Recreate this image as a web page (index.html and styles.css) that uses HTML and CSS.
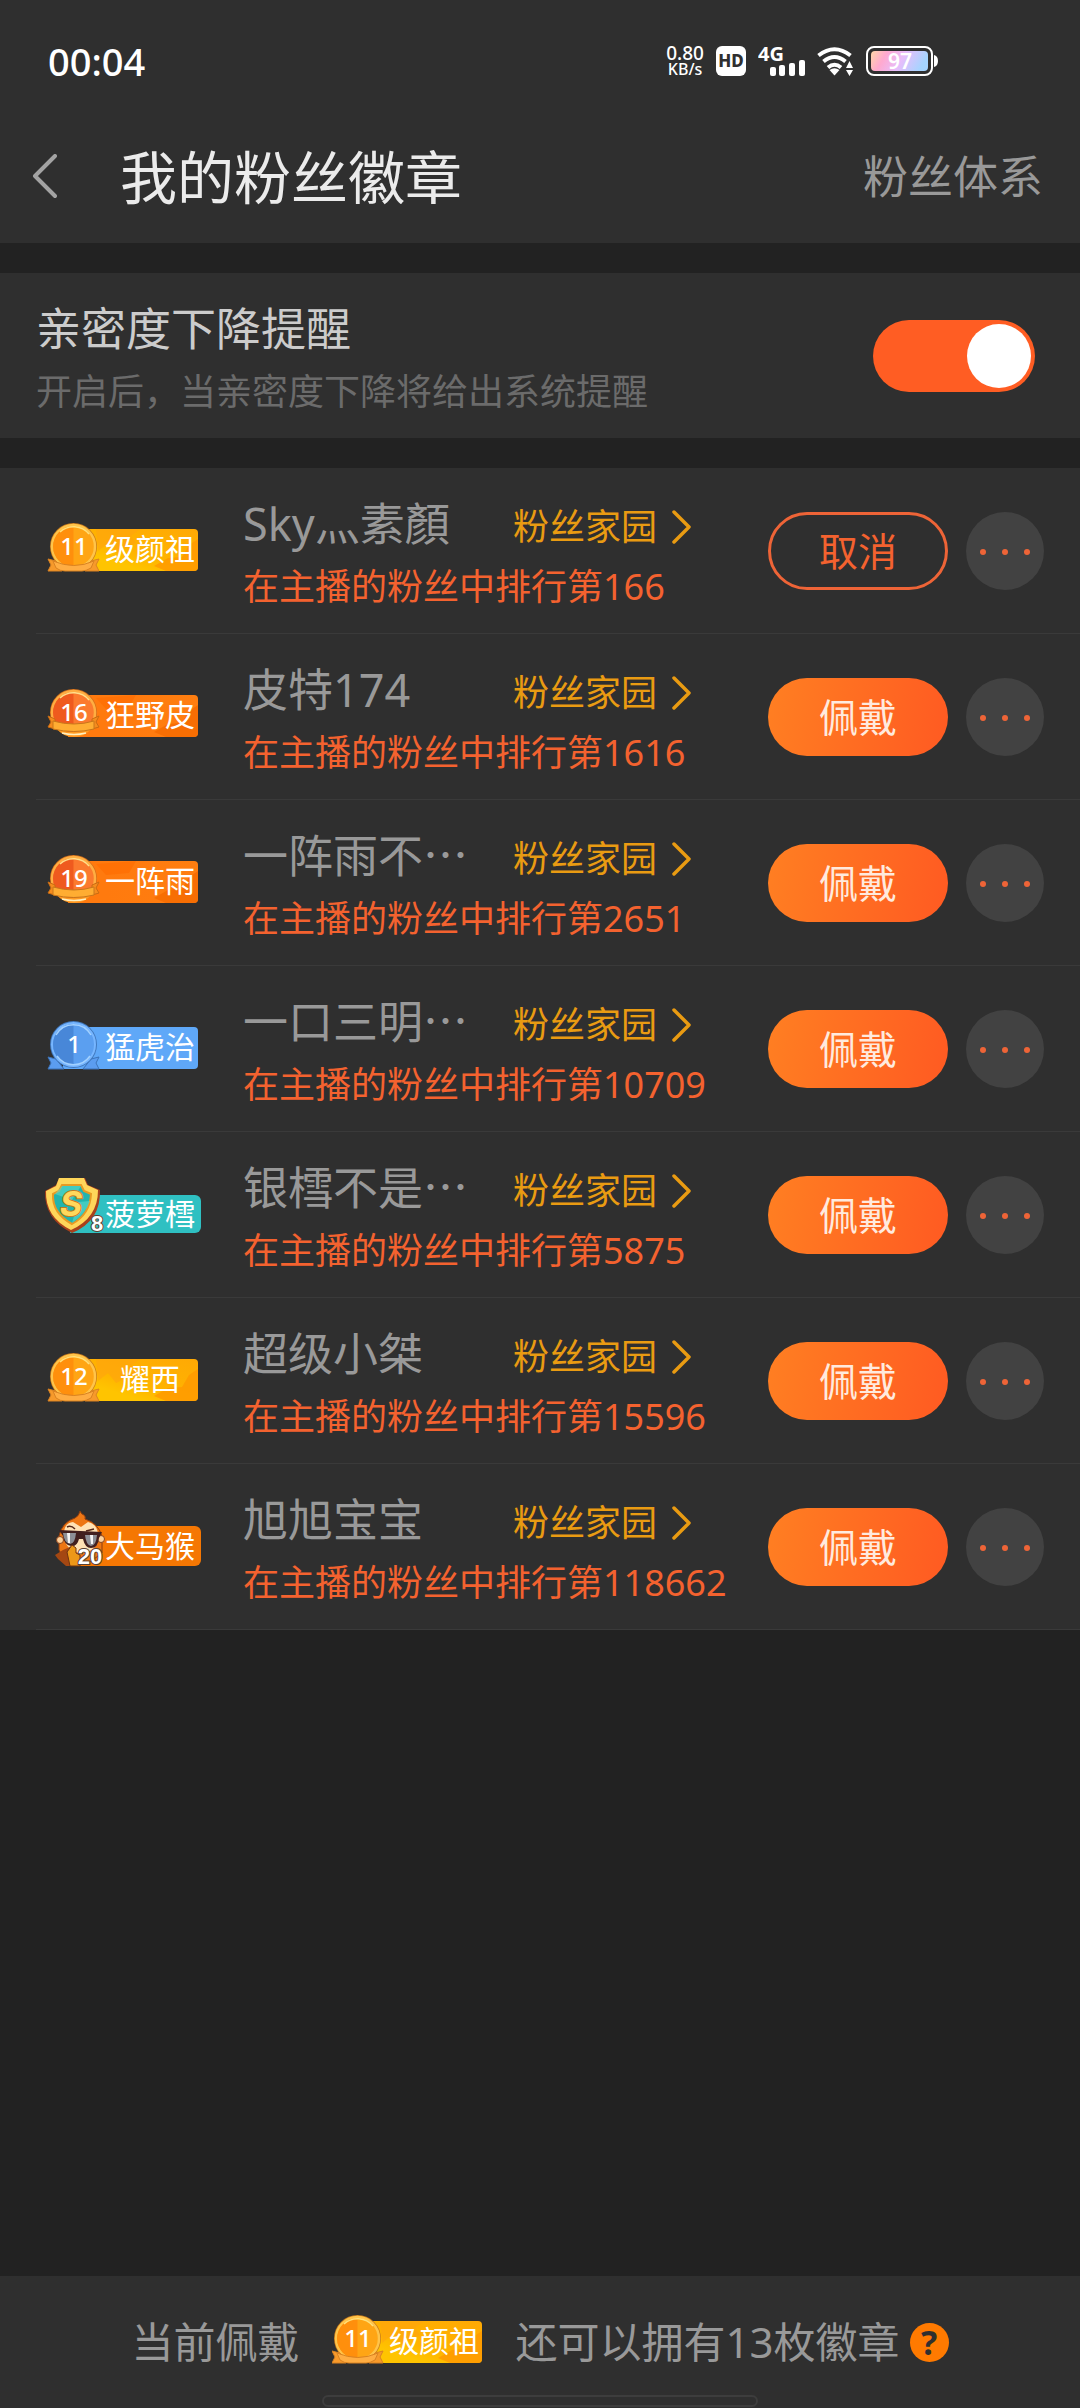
FILE: index.html
```html
<!DOCTYPE html>
<html lang="zh-CN">
<head>
<meta charset="utf-8">
<meta name="viewport" content="width=device-width, initial-scale=1">
<title>我的粉丝徽章</title>
<link rel="stylesheet" href="styles.css">
</head>
<body>
<svg class="sprite" aria-hidden="true">
  <defs>
    <linearGradient id="gold-bar" x1="0" y1="1" x2="1" y2="0"><stop offset="0.3" stop-color="#ffc400"/><stop offset="0.5" stop-color="#ffb300"/><stop offset="1" stop-color="#ffa904"/></linearGradient>
    <linearGradient id="orange-bar" x1="0" y1="0" x2="1" y2="0"><stop offset="0.3" stop-color="#ff7a0e"/><stop offset="1" stop-color="#ff7e10"/></linearGradient>
    <linearGradient id="battery" x1="0" y1="0" x2="1" y2="0.2"><stop offset="0" stop-color="#ffd7a8"/><stop offset="0.28" stop-color="#ffa9cf"/><stop offset="0.6" stop-color="#e7bdfb"/><stop offset="1" stop-color="#a6d4ff"/></linearGradient>
  </defs>
  <symbol id="gold" viewBox="44 45 160 76">
    <path d="M74 61H194a4 4 0 0 1 4 4V99a4 4 0 0 1-4 4H62z" fill="url(#gold-bar)"/>
    <path d="M96 61h44l-9 7 5 7-20 10-8-10-10 8z" fill="#ffa40f" opacity=".6"/>
    <path d="M154 98l14-8 14-1 7-12 9-6V99a4 4 0 0 1-4 4h-28z" fill="#ff9800" opacity=".8"/>
    <circle cx="73.500" cy="78.500" r="23.500" fill="#c97b1c"/>
    <circle cx="73.500" cy="78.500" r="21.500" fill="#ffa514" stroke="#ffc44a" stroke-width="2.500"/>
    <path d="M73.500 58a20 20 0 0 0 0 41z" fill="#ff8f0c"/>
    <path d="M60 64a20 20 0 0 1 29 2" fill="none" stroke="#ffe07a" stroke-width="1.500"/>
    <path d="M48 91l8 2 6 10H48l3-6zM99 91l-8 2-6 10h14l-3-6z" fill="#f79a2b" stroke="#d98222" stroke-width="1"/>
    <path d="M53 93q21 9 41 0l-3 7q-5 3-9 3H65q-5 0-9-3z" fill="#ffad42" stroke="#d98222" stroke-width="1"/>
  </symbol>
  <symbol id="orange" viewBox="44 45 160 76">
    <path d="M74 61H194a4 4 0 0 1 4 4V99a4 4 0 0 1-4 4H68z" fill="url(#orange-bar)"/>
    <path d="M96 64l40-3-7 12-23 2z" fill="#ff6a00" opacity=".6"/>
    <path d="M154 98l14-8 14-1 7-12 9-6V99a4 4 0 0 1-4 4h-28z" fill="#f56a00" opacity=".8"/>
    <circle cx="73.500" cy="78.500" r="23.500" fill="#d4701c"/>
    <circle cx="73.500" cy="78.500" r="21.500" fill="#fb7a2e" stroke="#ffae42" stroke-width="2.500"/>
    <path d="M73.500 58a20 20 0 0 0 0 41z" fill="#ef5a1e"/>
    <path d="M60 64a20 20 0 0 1 29 2" fill="none" stroke="#ffdf8a" stroke-width="1.500"/>
    <path d="M56 94q17 8 36 0-7 9-18 9t-18-9z" fill="#ff9a22"/>
    <path d="M62 99q12 3 24 0" fill="none" stroke="#fff0c0" stroke-width="1.500"/>
    <path d="M48 82l7 3v10l-7-2 3-5zM99 82l-7 3v10l7-2-3-5z" fill="#f58c1e" stroke="#c96b12" stroke-width="1"/>
    <path d="M53 87q21 6 41 0v8q-20 5-41 0z" fill="#ffad32" stroke="#c9761a" stroke-width="1"/>
  </symbol>
  <symbol id="blue" viewBox="44 45 160 76">
    <path d="M74 61H194a4 4 0 0 1 4 4V99a4 4 0 0 1-4 4H62z" fill="#5fa8f8"/>
    <path d="M48 91l8 2 8 10H48l3-6zM99 91l-8 2-8 10h16l-3-6z" fill="#5b9df0" stroke="#3c73b8" stroke-width="1"/>
    <circle cx="73.500" cy="78.500" r="23.500" fill="#4179be"/>
    <circle cx="73.500" cy="78.500" r="21.500" fill="#5b9ff0" stroke="#77b6ff" stroke-width="2"/>
    <path d="M73.500 58a20 20 0 0 0 0 41z" fill="#4887d8"/>
    <path d="M56 69a20 20 0 0 1 35 0M57 90a20 20 0 0 0 33 0" fill="none" stroke="#a2d1ff" stroke-width="1.500"/>
  </symbol>
  <symbol id="shield" viewBox="44 45 160 76">
    <path d="M74 63H195a6 6 0 0 1 6 6V95a6 6 0 0 1-6 6H70z" fill="#2fc0c2"/>
    <path d="M59 46H85l3 7 12 5q1 31-28 43-28-14-27-42l11-6z" fill="#a8401c"/>
    <path d="M59 46H84l3 7 11 5q0 28-27 40-26-13-25-39l10-5z" fill="#ffd65a"/>
    <path d="M62 53H81l3 6 7 3q-1 20-19 30-20-11-19-30l6-3z" fill="#22b4ae" stroke="#e79a24" stroke-width="2"/>
    <path d="M62 54H81l-9 14-17-6zM72 91q14-10 18-22l-12 1z" fill="#5adbcb" opacity=".6"/>
  </symbol>
  <symbol id="monkey" viewBox="44 45 160 76">
    <path d="M90 62H195a6 6 0 0 1 6 6V96a6 6 0 0 1-6 6H66z" fill="#f57703"/>
    <path d="M75 54q4-2 5-7 1 3 4 4 2 2 1 4 13 4 17 17v17l-12 9H66l-7-12V72q3-14 16-18z" fill="#ed7614" stroke="#8a3c10" stroke-width="1"/>
    <circle cx="60" cy="76" r="3.500" fill="#ffd29c" stroke="#8b421a"/>
    <circle cx="101" cy="75" r="3.500" fill="#ffd29c" stroke="#8b421a"/>
    <path d="M64 70q0-11 9-12l8 5 7-5q9 2 10 12 1 18-17 19-16-1-17-19z" fill="#ffe2b5"/>
    <path d="M67 63q4-2 8 2M86 67l8-2" fill="none" stroke="#542619" stroke-width="1.500"/>
    <path d="M59 66l43 2-3 6q-1 10-8 10-6 0-8-9h-4q-2 8-8 7-7-1-8-10z" fill="#42201f"/>
    <path d="M63 69h13q-1 11-6 11-6-1-7-11zM85 71h12q-1 11-6 11-5-1-6-11z" fill="#8d8f96"/>
    <path d="M67 69h3v10h-2zM90 71h3v9h-2z" fill="#f5f5f5"/>
    <path d="M55 91l8-5 9-4 2 5-5 4 6 1 1 10H66l-8-7z" fill="#a44712"/>
    <path d="M67 88l5-7 4 3v5l4 2v11H70z" fill="#ed9818" stroke="#70330f"/>
  </symbol>
  <symbol id="chevron" viewBox="0 0 20 34"><path d="M2 2l15 15L2 32" fill="none" stroke="currentColor" stroke-width="3.500" stroke-linecap="round" stroke-linejoin="round"/></symbol>
  <symbol id="dots" viewBox="0 0 50 8"><circle cx="3" cy="5" r="3"/><circle cx="25" cy="5" r="3"/><circle cx="47" cy="5" r="3"/></symbol>
</svg>

<div class="page">
  <header class="top">
    <div class="status">
      <span class="clock">00:04</span>
      <div class="status-icons">
        <span class="speed"><span>0.80</span><span class="unit">KB/s</span></span>
        <span class="hd">HD</span>
        <svg width="47" height="30" viewBox="0 0 47 30" fill="#fff"><text class="network" x="0" y="15">4G</text><rect x="12" y="21" width="6" height="9" rx="2"/><rect x="21" y="19" width="6" height="11" rx="2"/><rect x="31" y="17" width="6" height="13" rx="2"/><rect x="41" y="14" width="6" height="16" rx="2"/></svg>
        <svg width="37" height="30" viewBox="0 0 37 30"><g fill="none" stroke="#fff" stroke-width="4"><path d="M1.500 9.500q16-12.500 32 0"/><path d="M6.500 15.500q11-9 22 0"/><path d="M11 21.500q6.500-5.500 13 0"/></g><path d="M12.500 24q5-3.500 10 0l-5 5.500z" fill="#fff"/><path d="M29 22l3.500-7 3.500 7zM29 24l3.500 6 3.500-6z" fill="#fff"/></svg>
        <svg width="72" height="30" viewBox="0 0 72 30"><rect x="1" y="1" width="65" height="28" rx="7" fill="none" stroke="#fff" stroke-width="2"/><rect x="5" y="5" width="57" height="20" rx="4" fill="url(#battery)"/><path d="M68 9q4 1 4 6t-4 6z" fill="#fff"/><text class="charge" x="34" y="23">97</text></svg>
      </div>
    </div>
    <nav class="appbar">
      <button class="back" type="button" aria-label="返回"><svg width="26" height="46" viewBox="0 0 26 46"><path d="M23 2L3 22l20 20" fill="none" stroke="#a3a3a3" stroke-width="4" stroke-linecap="round" stroke-linejoin="round"/></svg></button>
      <h1 class="title">我的粉丝徽章</h1>
      <a class="system" href="#">粉丝体系</a>
    </nav>
  </header>

  <section class="setting">
    <label class="setting-text" for="remind">
      <span class="setting-title">亲密度下降提醒</span>
      <span class="setting-note">开启后，当亲密度下降将给出系统提醒</span>
    </label>
    <input class="toggle" id="remind" type="checkbox" role="switch" checked>
  </section>

  <main class="main">
    <ul class="list">
      <li class="row">
        <svg class="badge" viewBox="44 45 160 76"><use href="#gold" x="44" y="45" width="160" height="76"/><text class="level" x="74" y="87">11</text><text class="badge-name" x="150" y="92">级颜祖</text></svg>
        <div class="info"><span class="name">Sky灬素顏</span><a class="home" href="#">粉丝家园<svg class="arrow"><use href="#chevron"/></svg></a><span class="rank">在主播的粉丝中排行第166</span></div>
        <button class="wear wear-off" type="button">取消</button><button class="more" type="button" aria-label="更多"><svg class="dots"><use href="#dots"/></svg></button>
      </li>
      <li class="row">
        <svg class="badge" viewBox="44 45 160 76"><use href="#orange" x="44" y="45" width="160" height="76"/><text class="level" x="74" y="87">16</text><text class="badge-name" x="150" y="92">狂野皮</text></svg>
        <div class="info"><span class="name">皮特174</span><a class="home" href="#">粉丝家园<svg class="arrow"><use href="#chevron"/></svg></a><span class="rank">在主播的粉丝中排行第1616</span></div>
        <button class="wear" type="button">佩戴</button><button class="more" type="button" aria-label="更多"><svg class="dots"><use href="#dots"/></svg></button>
      </li>
      <li class="row">
        <svg class="badge" viewBox="44 45 160 76"><use href="#orange" x="44" y="45" width="160" height="76"/><text class="level" x="74" y="87">19</text><text class="badge-name" x="150" y="92">一阵雨</text></svg>
        <div class="info"><span class="name">一阵雨不<span class="cut">…</span></span><a class="home" href="#">粉丝家园<svg class="arrow"><use href="#chevron"/></svg></a><span class="rank">在主播的粉丝中排行第2651</span></div>
        <button class="wear" type="button">佩戴</button><button class="more" type="button" aria-label="更多"><svg class="dots"><use href="#dots"/></svg></button>
      </li>
      <li class="row">
        <svg class="badge" viewBox="44 45 160 76"><use href="#blue" x="44" y="45" width="160" height="76"/><text class="level" x="74" y="87">1</text><text class="badge-name" x="150" y="92">猛虎治</text></svg>
        <div class="info"><span class="name">一口三明<span class="cut">…</span></span><a class="home" href="#">粉丝家园<svg class="arrow"><use href="#chevron"/></svg></a><span class="rank">在主播的粉丝中排行第10709</span></div>
        <button class="wear" type="button">佩戴</button><button class="more" type="button" aria-label="更多"><svg class="dots"><use href="#dots"/></svg></button>
      </li>
      <li class="row">
        <svg class="badge" viewBox="44 45 160 76"><use href="#shield" x="44" y="45" width="160" height="76"/><text class="shield-letter" x="71" y="84">S</text><text class="pixel-number" x="97" y="99">8</text><text class="badge-name" x="150" y="93">菠萝樰</text></svg>
        <div class="info"><span class="name">银樰不是<span class="cut">…</span></span><a class="home" href="#">粉丝家园<svg class="arrow"><use href="#chevron"/></svg></a><span class="rank">在主播的粉丝中排行第5875</span></div>
        <button class="wear" type="button">佩戴</button><button class="more" type="button" aria-label="更多"><svg class="dots"><use href="#dots"/></svg></button>
      </li>
      <li class="row">
        <svg class="badge" viewBox="44 45 160 76"><use href="#gold" x="44" y="45" width="160" height="76"/><text class="level" x="74" y="87">12</text><text class="badge-name" x="150" y="92">耀西</text></svg>
        <div class="info"><span class="name">超级小桀</span><a class="home" href="#">粉丝家园<svg class="arrow"><use href="#chevron"/></svg></a><span class="rank">在主播的粉丝中排行第15596</span></div>
        <button class="wear" type="button">佩戴</button><button class="more" type="button" aria-label="更多"><svg class="dots"><use href="#dots"/></svg></button>
      </li>
      <li class="row">
        <svg class="badge" viewBox="44 45 160 76"><use href="#monkey" x="44" y="45" width="160" height="76"/><text class="pixel-number" x="90" y="100">20</text><text class="badge-name" x="150" y="93">大马猴</text></svg>
        <div class="info"><span class="name">旭旭宝宝</span><a class="home" href="#">粉丝家园<svg class="arrow"><use href="#chevron"/></svg></a><span class="rank">在主播的粉丝中排行第118662</span></div>
        <button class="wear" type="button">佩戴</button><button class="more" type="button" aria-label="更多"><svg class="dots"><use href="#dots"/></svg></button>
      </li>
    </ul>
  </main>

  <footer class="footer">
    <span>当前佩戴</span>
    <svg class="worn" viewBox="48 55 150 54"><use href="#gold" x="44" y="45" width="160" height="76"/><text class="level" x="74" y="87">11</text><text class="badge-name" x="150" y="92">级颜祖</text></svg>
    <span>还可以拥有13枚徽章</span>
    <button class="help" type="button" aria-label="帮助">?</button>
    <span class="gesture"></span>
  </footer>
</div>
</body>
</html>
```
FILE: styles.css
```css
* { box-sizing: border-box; }

body {
  margin: 0;
  background: #222;
  color: #999;
  font-family: "Noto Sans", "Noto Sans CJK SC", sans-serif;
}

button {
  margin: 0;
  padding: 0;
  border: 0;
  background: none;
  font: inherit;
  cursor: pointer;
}

a { color: inherit; text-decoration: none; }

.sprite { position: absolute; width: 0; height: 0; }

.page {
  display: flex;
  flex-direction: column;
  min-height: 100vh;
}

/* Header */
.top { background: #2f2f2f; }

.status {
  display: flex;
  align-items: center;
  justify-content: space-between;
  height: 111px;
  padding: 11px 142px 0 48px;
  color: #fff;
}

.clock { font-size: 38px; line-height: 48px; font-weight: 500; }

.status-icons { display: flex; align-items: center; gap: 12px; }

.speed {
  display: flex;
  flex-direction: column;
  align-items: center;
  font-size: 19px;
  line-height: 16px;
  font-weight: 500;
}

.unit { font-size: 16px; }

.hd {
  width: 30px;
  height: 30px;
  border-radius: 6px;
  background: #fff;
  color: #2f2f2f;
  font: 800 17px/30px "Noto Sans", sans-serif;
  text-align: center;
}

.network { font: 700 20px "Noto Sans", sans-serif; }

.charge {
  font: 600 21px "Noto Sans", sans-serif;
  fill: #fff;
  text-anchor: middle;
}

.appbar {
  display: flex;
  align-items: center;
  height: 132px;
  padding: 0 37px 0 32px;
}

.back { display: flex; width: 88px; }

.title {
  flex: 1;
  margin: 0;
  color: #ebebeb;
  font-size: 57px;
  line-height: 80px;
  font-weight: 400;
}

.system { font-size: 45px; line-height: 64px; }

/* Reminder setting */
.setting {
  display: flex;
  align-items: center;
  justify-content: space-between;
  min-height: 165px;
  margin: 30px 0;
  padding: 0 45px 0 36px;
  background: #2f2f2f;
}

.setting-text { display: flex; flex-direction: column; padding-top: 4px; }

.setting-title { color: #ccc; font-size: 45px; line-height: 68px; }

.setting-note { color: #6b6b6b; font-size: 36px; line-height: 58px; }

.toggle {
  appearance: none;
  display: flex;
  justify-content: flex-end;
  width: 162px;
  height: 72px;
  margin: 0;
  padding: 4px;
  border-radius: 36px;
  background: #ff5d23;
}

.toggle::before {
  content: "";
  width: 64px;
  height: 64px;
  border-radius: 50%;
  background: #fff;
}

.toggle:not(:checked) { justify-content: flex-start; background: #555; }

/* Badge list */
.main { flex: 1; }

.list {
  margin: 0;
  padding: 0 0 0 36px;
  background: #2f2f2f;
  list-style: none;
}

.row {
  display: flex;
  align-items: center;
  min-height: 166px;
  padding: 0 36px 0 8px;
  border-bottom: 1px solid #3a3a3a;
}

.badge { flex: none; width: 160px; height: 76px; }

.level {
  font: 500 24px "Noto Sans", sans-serif;
  fill: #fff;
  text-anchor: middle;
}

.badge-name {
  font-size: 30px;
  fill: #fff;
  text-anchor: middle;
}

.shield-letter {
  font: italic 700 34px "Inter", sans-serif;
  fill: #ffd85c;
  stroke: #c67a1c;
  stroke-width: 2px;
  paint-order: stroke;
  text-anchor: middle;
}

.pixel-number {
  font: 700 22px "Liberation Sans", sans-serif;
  fill: #fff;
  stroke: #5a4030;
  stroke-width: 2px;
  paint-order: stroke;
  text-anchor: middle;
}

.info {
  display: grid;
  flex: 1;
  grid-template-columns: 270px auto;
  row-gap: 7px;
  margin-left: 39px;
  padding-top: 2px;
  white-space: nowrap;
}

.name { font-size: 45px; line-height: 64px; }

.cut { font-family: "Noto Sans CJK SC", sans-serif; line-height: 1; }

.home {
  display: flex;
  align-items: center;
  align-self: end;
  gap: 15px;
  color: #e99b12;
  font-size: 36px;
  line-height: 58px;
}

.arrow { width: 20px; height: 34px; }

.rank {
  grid-column: 1 / -1;
  color: #f4622f;
  font-size: 36px;
  line-height: 48px;
}

.wear {
  flex: none;
  width: 180px;
  height: 78px;
  border-radius: 39px;
  background: linear-gradient(100deg, #ff7f22, #ff5a22);
  color: #ffeade;
  font-size: 39px;
  line-height: 78px;
}

.wear-off {
  border: 3px solid #ee6437;
  background: none;
  color: #f4622f;
  line-height: 72px;
}

.more {
  display: flex;
  flex: none;
  align-items: center;
  justify-content: center;
  width: 78px;
  height: 78px;
  margin-left: 18px;
  border-radius: 50%;
  background: #424242;
}

.dots { width: 50px; height: 8px; fill: #ee6437; }

/* Footer */
.footer {
  position: relative;
  display: flex;
  align-items: center;
  justify-content: center;
  min-height: 132px;
  background: #2f2f2f;
  font-size: 42px;
  line-height: 60px;
  white-space: nowrap;
}

.worn { width: 150px; height: 54px; margin: 0 33px; }

.help {
  width: 39px;
  height: 39px;
  margin-left: 10px;
  border-radius: 50%;
  background: #ff7a00;
  color: #2f2f2f;
  font-size: 34px;
  font-weight: 700;
  line-height: 39px;
}

.gesture {
  position: absolute;
  bottom: 1px;
  left: 50%;
  width: 436px;
  height: 12px;
  margin-left: -218px;
  border: 2px solid #3d3d3d;
  border-radius: 6px;
}
```
